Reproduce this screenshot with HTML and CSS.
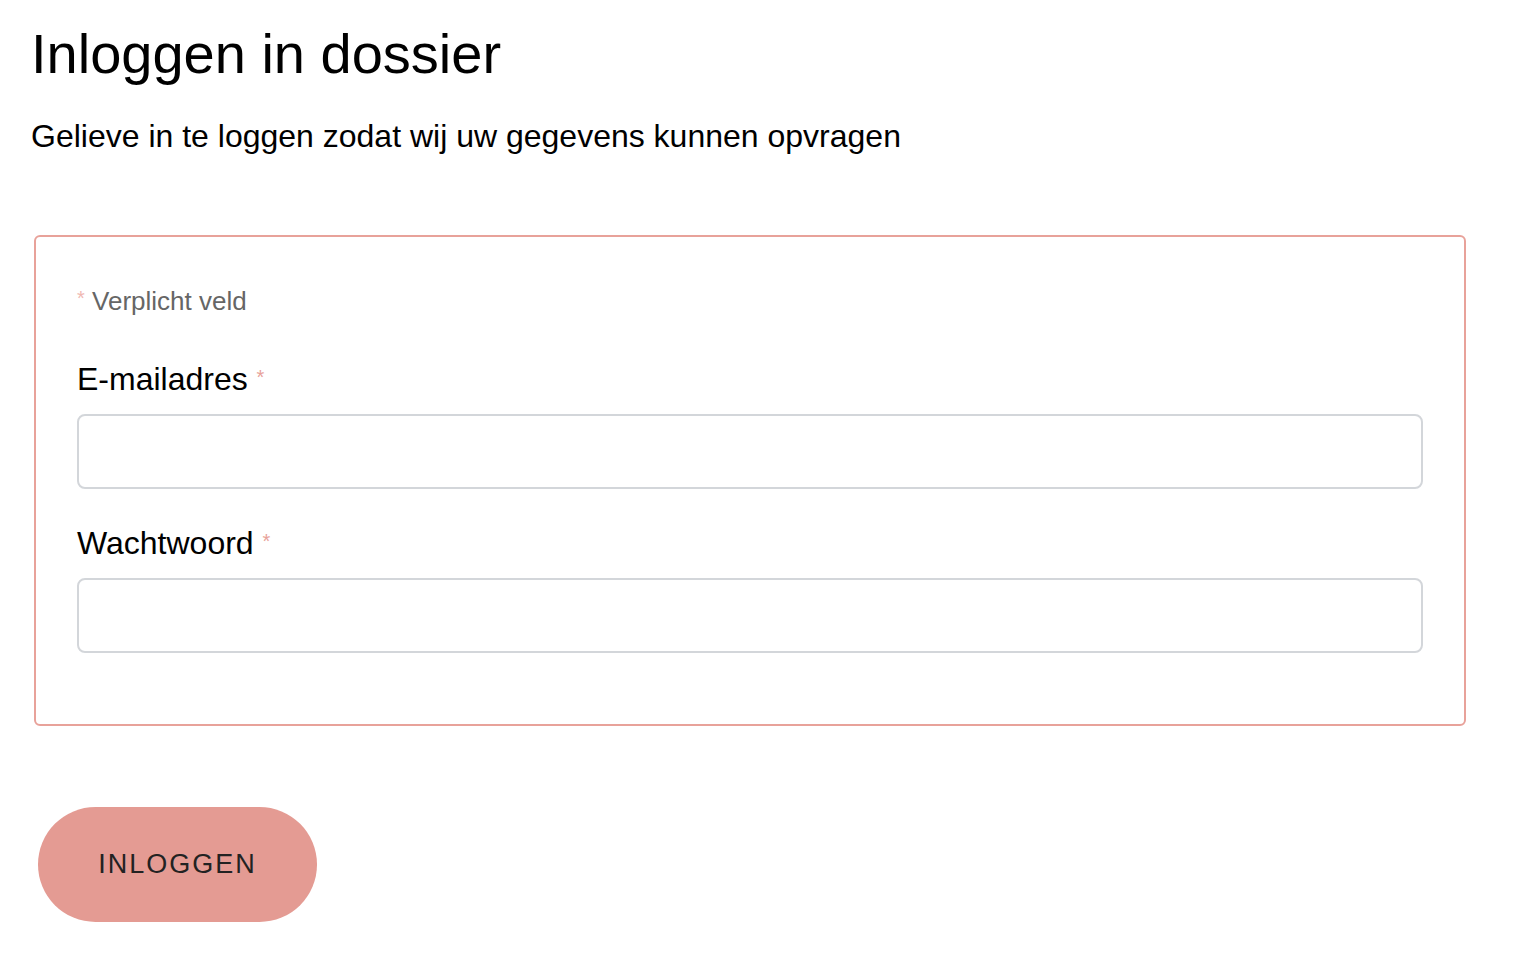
FILE: index.html
```html
<!DOCTYPE html>
<html lang="nl">
<head>
    <meta charset="UTF-8">
    <meta name="viewport" content="width=device-width, initial-scale=1.0">
    <title>Inloggen in dossier</title>
    <link rel="stylesheet" href="styles.css">
</head>
<body>

<div class="page">
    <h1>Inloggen in dossier</h1>

    <p class="intro">Gelieve in te loggen zodat wij uw gegevens kunnen opvragen</p>

    <form class="login-form">
        <div class="required-note"><span class="req">*</span> Verplicht veld</div>

        <div class="field">
            <label for="email">E-mailadres <span class="req">*</span></label>
            <input type="email" id="email" name="email">
        </div>

        <div class="field">
            <label for="password">Wachtwoord <span class="req">*</span></label>
            <input type="password" id="password" name="password">
        </div>
    </form>

    <button type="button" class="btn-login">INLOGGEN</button>
</div>

</body>
</html>
```

FILE: styles.css
```css
body {
    font-family: "Liberation Sans", Arial, Helvetica, sans-serif;
    margin: 0;
    background-color: #ffffff;
    color: #000000;
}

.page {
    padding: 21px 56px 40px 31px;
}

h1 {
    font-size: 56px;
    font-weight: normal;
    margin: 0;
}

.intro {
    font-size: 32px;
    margin: 32px 0 0 0;
}

.login-form {
    margin: 80px 0 0 3px;
    border: 2px solid #e8a29a;
    border-radius: 6px;
    padding: 49px 41px 71px 41px;
}

.required-note {
    font-size: 26px;
    color: #666666;
}

.req {
    color: #e8a29a;
    font-size: 20px;
    vertical-align: 6px;
}

.required-note .req {
    color: #f0b8b2;
    vertical-align: 5px;
}

.field {
    margin-top: 44px;
}

.field + .field {
    margin-top: 36px;
}

.field label {
    display: block;
    font-size: 32px;
    margin-bottom: 16px;
}

.field input {
    display: block;
    box-sizing: border-box;
    width: 100%;
    height: 75px;
    border: 2px solid #d3d6da;
    border-radius: 8px;
    font-size: 24px;
    padding: 0 16px;
    background: #ffffff;
}

.btn-login {
    display: block;
    margin: 81px 0 0 7px;
    width: 279px;
    height: 115px;
    border: none;
    border-radius: 58px;
    background-color: #e49b93;
    color: #222222;
    font-family: "Liberation Sans", Arial, Helvetica, sans-serif;
    font-size: 27px;
    letter-spacing: 2px;
    cursor: pointer;
}
```
